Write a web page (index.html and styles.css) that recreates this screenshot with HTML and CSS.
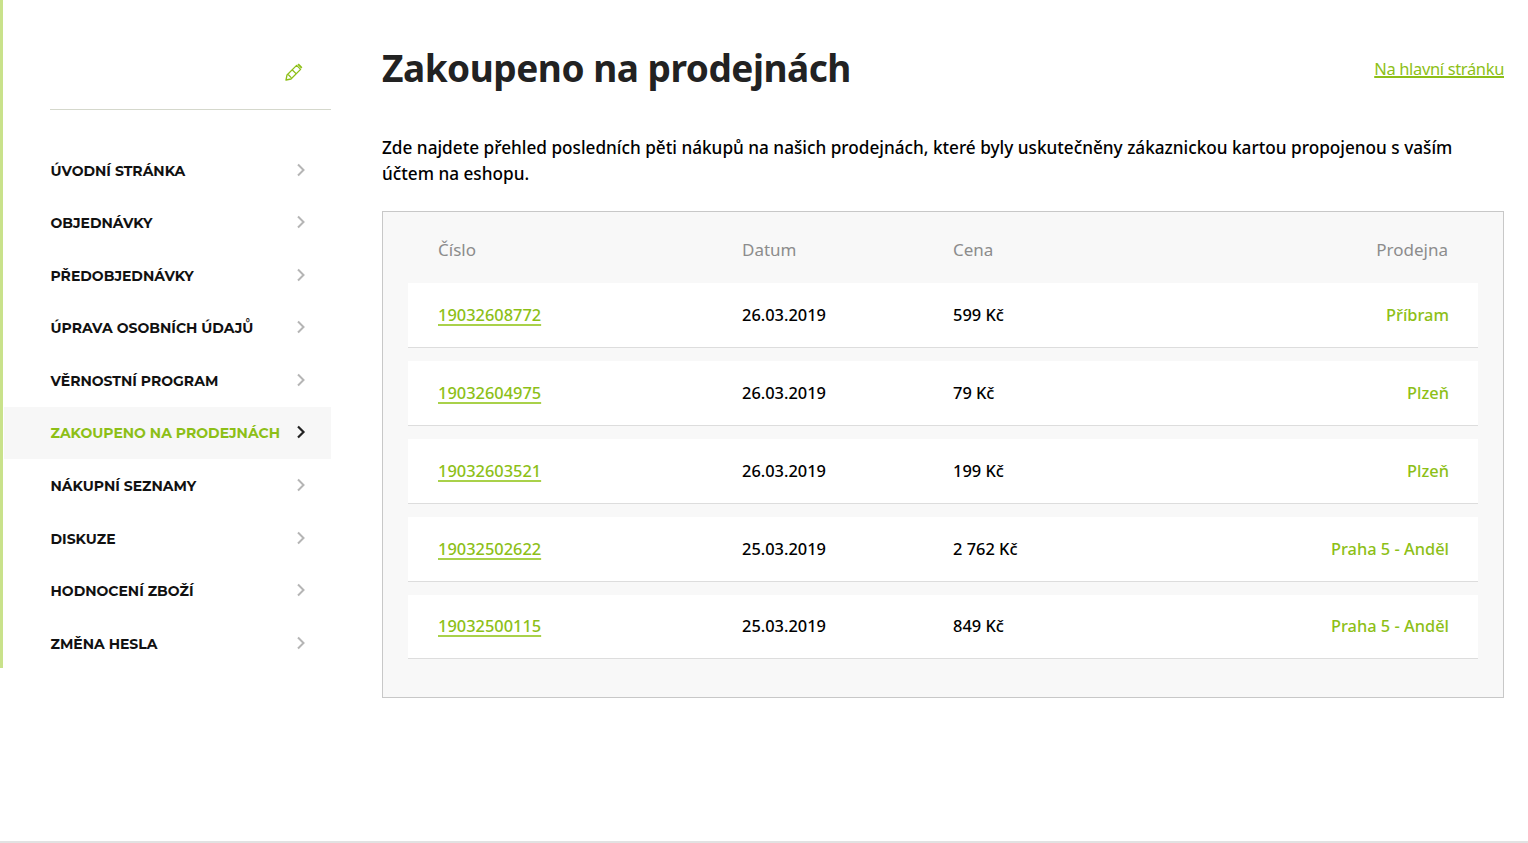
FILE: index.html
```html
<!DOCTYPE html>
<html lang="cs">
<head>
  <meta charset="UTF-8" />
  <title>Zakoupeno na prodejnách</title>
  <link rel="stylesheet" href="styles.css">
</head>
<body>
  <div class="page">
    <!-- Sidebar -->
    <aside class="sidebar">
      <div class="user-box">
        <svg class="edit-icon" viewBox="0 0 18 18" width="18" height="18">
          <path d="M1 17 L2 12 L11.6 2.4 L15.6 6.4 L6 16 Z M3.4 11.8 L6.2 14.6 M7.6 7.2 L10.8 10.4" fill="none" stroke="#8dbf17" stroke-width="1.3" stroke-linejoin="round"/>
          <path d="M12.4 1.8 L13.8 0.6 L17.4 4.2 L16.2 5.6 Z" fill="#8dbf17"/>
        </svg>
      </div>
      <nav class="menu">
        <a class="menu-item" href="#">Úvodní stránka<svg class="chevron" viewBox="0 0 10 14"><path d="M2 1.5 L7.5 7 L2 12.5"/></svg></a>
        <a class="menu-item" href="#">Objednávky<svg class="chevron" viewBox="0 0 10 14"><path d="M2 1.5 L7.5 7 L2 12.5"/></svg></a>
        <a class="menu-item" href="#">Předobjednávky<svg class="chevron" viewBox="0 0 10 14"><path d="M2 1.5 L7.5 7 L2 12.5"/></svg></a>
        <a class="menu-item" href="#">Úprava osobních údajů<svg class="chevron" viewBox="0 0 10 14"><path d="M2 1.5 L7.5 7 L2 12.5"/></svg></a>
        <a class="menu-item" href="#">Věrnostní program<svg class="chevron" viewBox="0 0 10 14"><path d="M2 1.5 L7.5 7 L2 12.5"/></svg></a>
        <a class="menu-item active" href="#">Zakoupeno na prodejnách<svg class="chevron" viewBox="0 0 10 14"><path d="M2 1.5 L7.5 7 L2 12.5"/></svg></a>
        <a class="menu-item" href="#">Nákupní seznamy<svg class="chevron" viewBox="0 0 10 14"><path d="M2 1.5 L7.5 7 L2 12.5"/></svg></a>
        <a class="menu-item" href="#">Diskuze<svg class="chevron" viewBox="0 0 10 14"><path d="M2 1.5 L7.5 7 L2 12.5"/></svg></a>
        <a class="menu-item" href="#">Hodnocení zboží<svg class="chevron" viewBox="0 0 10 14"><path d="M2 1.5 L7.5 7 L2 12.5"/></svg></a>
        <a class="menu-item" href="#">Změna hesla<svg class="chevron" viewBox="0 0 10 14"><path d="M2 1.5 L7.5 7 L2 12.5"/></svg></a>
      </nav>
    </aside>

    <!-- Content -->
    <main class="content">
      <div class="head">
        <h1>Zakoupeno na prodejnách</h1>
        <a class="home-link" href="#">Na hlavní stránku</a>
      </div>
      <p class="intro">Zde najdete přehled posledních pěti nákupů na našich prodejnách, které byly uskutečněny zákaznickou kartou propojenou s vaším účtem na eshopu.</p>

      <div class="orders">
        <div class="orders-head">
          <span>Číslo</span>
          <span>Datum</span>
          <span>Cena</span>
          <span class="store-col">Prodejna</span>
        </div>
        <div class="order">
          <a href="#">19032608772</a>
          <span>26.03.2019</span>
          <span>599 Kč</span>
          <span class="store store-col">Příbram</span>
        </div>
        <div class="order">
          <a href="#">19032604975</a>
          <span>26.03.2019</span>
          <span>79 Kč</span>
          <span class="store store-col">Plzeň</span>
        </div>
        <div class="order">
          <a href="#">19032603521</a>
          <span>26.03.2019</span>
          <span>199 Kč</span>
          <span class="store store-col">Plzeň</span>
        </div>
        <div class="order">
          <a href="#">19032502622</a>
          <span>25.03.2019</span>
          <span>2 762 Kč</span>
          <span class="store store-col">Praha 5 - Anděl</span>
        </div>
        <div class="order">
          <a href="#">19032500115</a>
          <span>25.03.2019</span>
          <span>849 Kč</span>
          <span class="store store-col">Praha 5 - Anděl</span>
        </div>
      </div>
    </main>
  </div>
  <div class="footer-line"></div>
</body>
</html>
```

FILE: styles.css
```css
html, body {
  margin: 0;
  height: 843px;
  overflow: hidden;
  background: #fff;
  font-family: "Noto Sans", "Open Sans", sans-serif;
  color: #111;
}

.page {
  display: flex;
  align-items: flex-start;
  height: 841px;
  box-sizing: border-box;
  padding-right: 24px;
}

/* Sidebar */
.sidebar {
  width: 327px;
  height: 668px;
  border-left: 3px solid #c9e28b;
  padding-left: 1px;
  flex-shrink: 0;
}

.user-box {
  height: 110px;
  margin-left: 46px;
  border-bottom: 1px solid #d5d8cc;
  display: flex;
  justify-content: flex-end;
  align-items: flex-start;
  padding: 63px 28px 0 0;
  box-sizing: border-box;
}

.menu {
  display: flex;
  flex-direction: column;
  margin-top: 34px;
}

.menu-item {
  height: 52.55px;
  display: flex;
  align-items: center;
  justify-content: space-between;
  padding: 1px 25px 0 46.5px;
  box-sizing: border-box;
  font-family: "Montserrat", "Inter", "Noto Sans", sans-serif;
  font-size: 14px;
  font-weight: 700;
  text-transform: uppercase;
  text-decoration: none;
  color: #111;
}

.menu-item.active {
  padding-top: 0;
  background: #f7f7f7;
  color: #8dbf17;
}

.chevron {
  width: 10px;
  height: 14px;
  margin-top: -2px;
  fill: none;
  stroke: #b5b5b5;
  stroke-width: 2;
}

.active .chevron {
  stroke: #222;
  stroke-width: 2.2;
}

/* Content */
.content {
  margin-left: 51px;
  flex: 1;
  min-width: 0;
}

.head {
  display: flex;
  justify-content: space-between;
  align-items: center;
  height: 66px;
  margin-top: 35px;
}

h1 {
  margin: 0;
  font-size: 37px;
  font-weight: 700;
  letter-spacing: -0.48px;
  color: #222;
  line-height: 66px;
}

.home-link {
  font-size: 16.5px;
  letter-spacing: -0.35px;
  color: #8dbf17;
  text-decoration: underline;
  text-decoration-thickness: 2px;
  margin-top: 0;
}

.intro {
  margin: 34px 0 25px;
  font-size: 17.2px;
  font-weight: 500;
  line-height: 25.5px;
  color: #000;
}

.orders {
  background: #f8f8f8;
  border: 1px solid #c8c8c8;
  height: 487px;
  box-sizing: border-box;
  padding: 0 25px;
}

.orders-head, .order {
  display: grid;
  grid-template-columns: 304px 211px 1fr 300px;
  align-items: center;
  padding: 0 30px;
}

.orders-head {
  height: 71px;
  padding-top: 4px;
  box-sizing: border-box;
  font-size: 17px;
  color: #8c8c8c;
}

.order {
  height: 65px;
  margin-bottom: 13px;
  padding-bottom: 2px;
  box-sizing: border-box;
  background: #fff;
  border-bottom: 1px solid #ddd;
  font-size: 16.4px;
  font-weight: 500;
  color: #000;
}

.order:last-child {
  height: 64px;
}

.order a {
  color: #8dbf17;
  text-decoration-thickness: 1.5px;
  text-decoration-color: #a9d14a;
  text-underline-offset: 3px;
}

.store-col {
  text-align: right;
}

.store {
  color: #8dbf17;
  margin-right: -1px;
}

.footer-line {
  height: 2px;
  background: #e2e2e2;
}
```
